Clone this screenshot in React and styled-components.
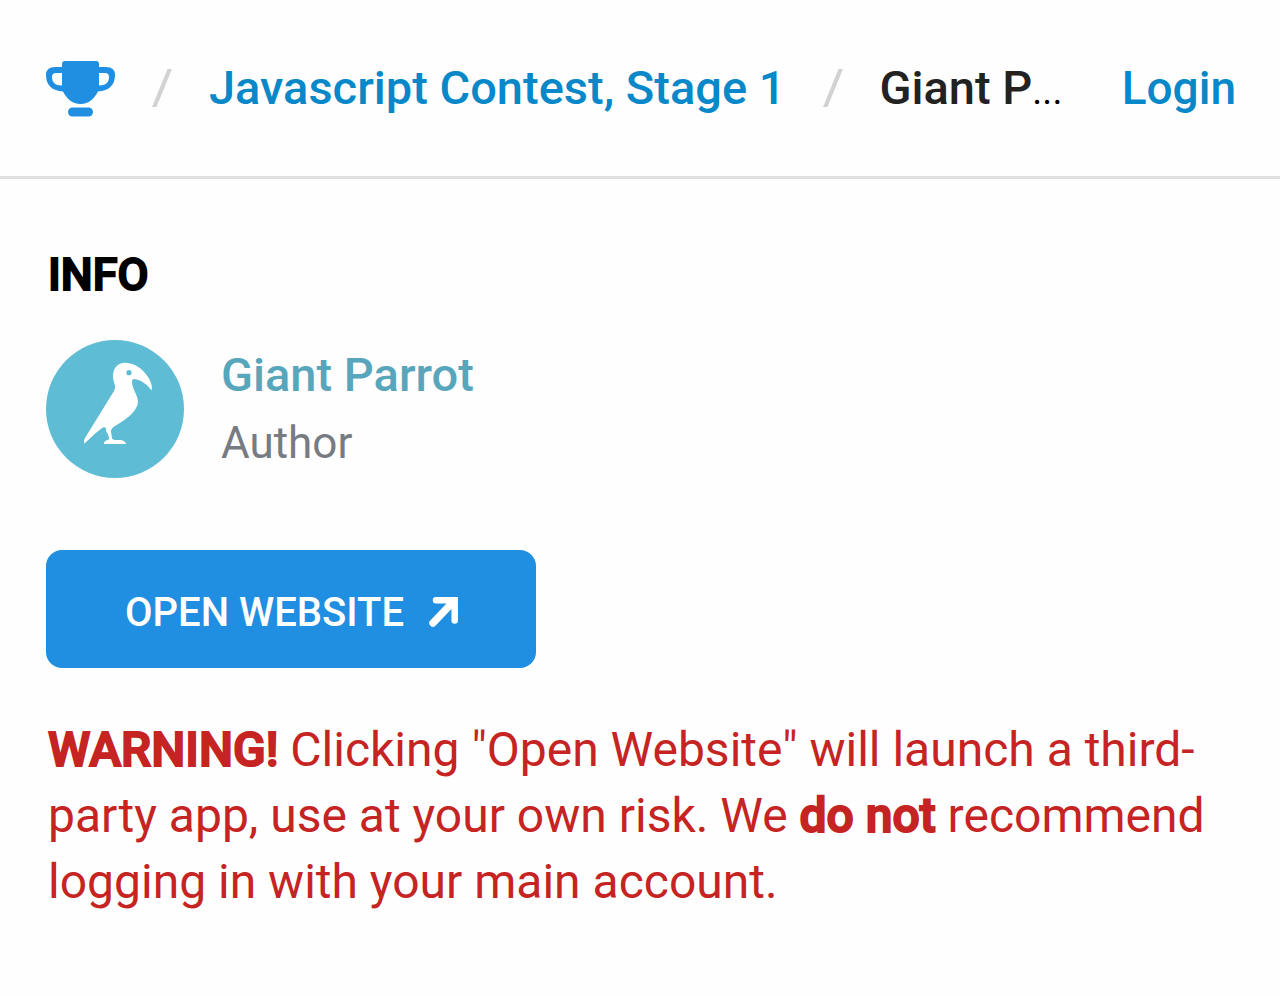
import React from 'react';
import styled, { createGlobalStyle } from 'styled-components';

const GlobalStyle = createGlobalStyle`
    * {
        box-sizing: border-box;
    }

    body {
        margin: 0;
        background: #fefefe;
        color: #000;
        font-family: Roboto, "Liberation Sans", sans-serif;
        font-size: 48px;
    }

    a {
        text-decoration: none;
    }
`;

const Header = styled.header`
    display: flex;
    align-items: center;
    justify-content: space-between;
    gap: 40px;
    height: 179px;
    padding: 0 44px 0 46px;
    border-bottom: 3px solid #dfdfe1;
`;

const Breadcrumb = styled.nav`
    display: flex;
    align-items: center;
    min-width: 0;
    font-size: 47px;
    font-weight: 500;
    line-height: 60px;
    white-space: nowrap;
`;

const CrumbLink = styled.a`
    display: flex;
    flex: none;
    color: #0888c8;
`;

const Slash = styled.svg`
    flex: none;
    width: 20px;
    height: 38px;
    margin: 0 37px;
`;

const Current = styled.span`
    color: #222;
`;

const Dots = styled.span`
    color: #000;
    font-size: 38px;
    font-weight: 400;
    line-height: 1;
`;

const LoginLink = styled.a`
    flex: none;
    color: #0888c8;
    font-size: 46px;
    font-weight: 500;
    line-height: 60px;
`;

const Main = styled.main`
    padding: 70px 46px;
`;

const Title = styled.h1`
    margin: 0 0 39px;
    padding: 0 2px;
    font-size: 45px;
    font-weight: 500;
    line-height: 52px;
    -webkit-text-stroke: 2px currentColor;
`;

const Author = styled.section`
    display: flex;
    align-items: center;
    gap: 37px;
    margin-bottom: 72px;
`;

const Avatar = styled.svg`
    width: 138px;
    height: 138px;
`;

const AuthorName = styled.a`
    display: block;
    color: #58a6bb;
    font-size: 47px;
    font-weight: 500;
    line-height: 68px;
`;

const AuthorRole = styled.div`
    color: #777b82;
    font-size: 44px;
    line-height: 68px;
`;

const OpenButton = styled.button`
    display: flex;
    align-items: center;
    gap: 25px;
    height: 118px;
    padding: 6px 77px 0 79px;
    border: 0;
    border-radius: 16px;
    background: #218fe1;
    color: #fff;
    font: 500 40px Roboto, "Liberation Sans", sans-serif;
    cursor: pointer;
`;

const Warning = styled.p`
    margin: 49px 0 0;
    padding: 0 2px;
    color: #c62323;
    font-size: 48px;
    line-height: 66px;
`;

const Strong = styled.strong`
    font-weight: 500;
    -webkit-text-stroke: 2px currentColor;
`;

const TrophyIcon = () => (
    <svg width="69" height="57" viewBox="0 0 69 57" fill="#218fe1" aria-hidden="true">
        <path
            fillRule="evenodd"
            d="M19 1H50Q53 1 53 4V7H60Q69 7 69 15C69 25 63 31 52 31.500C48 39 43 44 34.500 44C26 44 21 39 17 31.500C6 31 0 25 0 15Q0 7 9 7H16V4Q16 1 19 1ZM16 13H10Q6 13 6 17C6 22 9 25.500 16 25.500ZM53 13V25.500C60 25.500 63 22 63 17Q63 13 59 13Z"
        />
        <rect x="22" y="47.500" width="25" height="9" rx="4.500" />
    </svg>
);

const ParrotIcon = () => (
    <Avatar viewBox="0 0 138 138" aria-hidden="true">
        <circle cx="69" cy="69" r="69" fill="#5ebcd4" />
        <path
            fill="#fff"
            d="M79 22.700C72 22.700 67 28 67 36C67 43 71 45 68 51L39 98C38 100 37.500 102 38.500 103.500C44 99 51 91 57.500 87.300C60 87 60 88 60 91C62 94 63 96 63 99.500C60 100.500 58 101 58 104H80C79 101 77 100 73 100C69 100 66.500 100 66 98L65 92C65 89 66 88 69 86C79 80 88 74 91.500 65C94 57 86 50 86 42Q86 39 88 39C95 40 101 44 105.500 50.500C107 45 104 39 99 33C93 26 86 22.700 79 22.700Z"
        />
        <circle cx="83" cy="32.700" r="2.600" fill="#5ebcd4" />
    </Avatar>
);

const ArrowIcon = () => (
    <svg width="30" height="30" viewBox="0 0 30 30" fill="none" stroke="#fff" strokeLinecap="round" aria-hidden="true">
        <path d="M7 3.300H25.700V23.500" strokeWidth="6.500" />
        <path d="M24 5L4 26" strokeWidth="7.500" />
    </svg>
);

const Separator = () => (
    <Slash viewBox="0 0 20 38" fill="#d2d2d3" aria-hidden="true">
        <path d="M15.500 0H20L4.500 38H0Z" />
    </Slash>
);

const App = () => (
    <>
        <GlobalStyle />
        <Header>
            <Breadcrumb aria-label="Breadcrumb">
                <CrumbLink href="#contests" aria-label="Contests"><TrophyIcon /></CrumbLink>
                <Separator />
                <CrumbLink href="#stage-1">Javascript Contest, Stage 1</CrumbLink>
                <Separator />
                <Current>Giant P<Dots>...</Dots></Current>
            </Breadcrumb>
            <LoginLink href="#login">Login</LoginLink>
        </Header>
        <Main>
            <Title>INFO</Title>
            <Author>
                <ParrotIcon />
                <div>
                    <AuthorName href="#author">Giant Parrot</AuthorName>
                    <AuthorRole>Author</AuthorRole>
                </div>
            </Author>
            <OpenButton type="button">
                OPEN WEBSITE
                <ArrowIcon />
            </OpenButton>
            <Warning>
                <Strong>WARNING!</Strong> Clicking "Open Website" will launch a third-party app, use at your own risk. We <Strong>do not</Strong> recommend logging in with your main account.
            </Warning>
        </Main>
    </>
);

export default App;
